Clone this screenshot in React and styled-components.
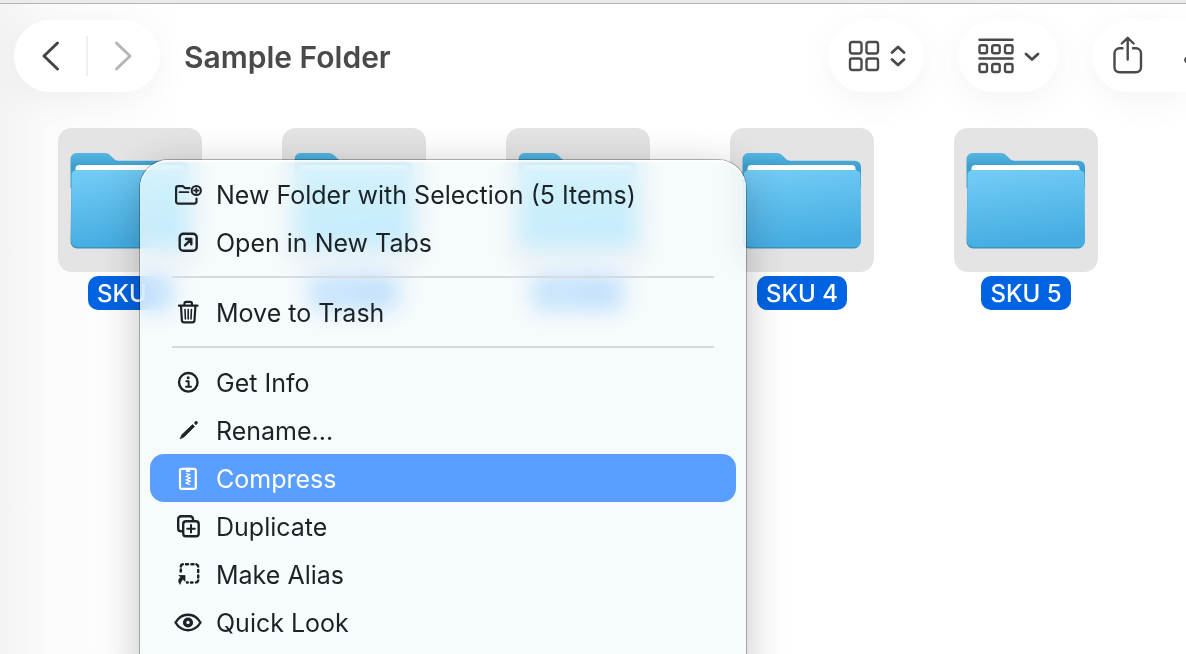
import React from "react";

import styled, { createGlobalStyle } from "styled-components";

const files = ["SKU 1", "SKU 2", "SKU 3", "SKU 4", "SKU 5"];

function App() {
  return (
    <>
      <GlobalStyle />
      <Window>
        <Toolbar>
          <NavGroup>
            <NavButton type="button" aria-label="Back">
              <BackIcon />
            </NavButton>
            <NavDivider />
            <NavButton type="button" aria-label="Forward" $muted>
              <ForwardIcon />
            </NavButton>
          </NavGroup>
          <Title>Sample Folder</Title>
          <ToolButton type="button" aria-label="View as icons">
            <GridIcon />
            <UpDownIcon />
          </ToolButton>
          <ToolButton type="button" aria-label="Group items">
            <GroupIcon />
            <DownIcon />
          </ToolButton>
          <EdgeGroup>
            <EdgeButton type="button" aria-label="Share">
              <ShareIcon />
            </EdgeButton>
            <EdgeButton type="button" aria-label="Edit tags">
              <TagIcon />
            </EdgeButton>
          </EdgeGroup>
        </Toolbar>
        <Files>
          {files.map((name) => (
            <File key={name}>
              <Thumb>
                <FolderIcon />
              </Thumb>
              <FileName>{name}</FileName>
            </File>
          ))}
        </Files>
        <Menu aria-label="Folder actions">
          <MenuItem type="button">
            <NewFolderIcon />
            New Folder with Selection (5 Items)
          </MenuItem>
          <MenuItem type="button">
            <OpenIcon />
            Open in New Tabs
          </MenuItem>
          <Separator />
          <MenuItem type="button">
            <TrashIcon />
            Move to Trash
          </MenuItem>
          <Separator />
          <MenuItem type="button">
            <InfoIcon />
            Get Info
          </MenuItem>
          <MenuItem type="button">
            <PencilIcon />
            Rename...
          </MenuItem>
          <MenuItem type="button" $active>
            <ZipIcon />
            Compress
          </MenuItem>
          <MenuItem type="button">
            <DuplicateIcon />
            Duplicate
          </MenuItem>
          <MenuItem type="button">
            <AliasIcon />
            Make Alias
          </MenuItem>
          <MenuItem type="button">
            <EyeIcon />
            Quick Look
          </MenuItem>
        </Menu>
      </Window>
    </>
  );
}

const GlobalStyle = createGlobalStyle`
  * {
    box-sizing: border-box;
  }
  body {
    margin: 0;
    font-family: Inter, "Liberation Sans", sans-serif;
  }
  button {
    border: none;
    padding: 0;
    background: none;
    font: inherit;
    color: inherit;
  }
`;

const Window = styled.div`
  position: relative;
  height: 100vh;
  overflow: hidden;
  border-top: 3px solid #ebebeb;
  box-shadow: inset 0 1px #b4b4b4;
  background: linear-gradient(to right, #f3f3f4, #fbfbfb 50px, #fff 180px);
`;

const Toolbar = styled.header`
  display: flex;
  align-items: center;
  gap: 34px;
  padding: 17px 0 36px 14px;
`;

const Pill = styled.div`
  display: flex;
  align-items: center;
  height: 72px;
  border-radius: 36px;
  background: #fff;
  box-shadow: 0 8px 36px rgba(0, 0, 0, 0.05);
  color: #4a4a4a;
`;

const NavGroup = styled(Pill)``;

const NavButton = styled.button`
  display: flex;
  justify-content: center;
  width: 72px;
  color: ${(props) => (props.$muted ? "#b5b5b5" : "#444")};
`;

const NavDivider = styled.span`
  width: 2px;
  height: 40px;
  background: #f0f0f0;
`;

const Title = styled.h1`
  flex: 1;
  margin: 0 0 0 -10px;
  padding-top: 2px;
  font-size: 30px;
  font-weight: 600;
  line-height: 36px;
  color: #4a4a4a;
  white-space: nowrap;
`;

const ToolButton = styled(Pill).attrs({ as: "button" })`
  gap: 10px;
  padding: 0 18px 0 20px;
`;

const EdgeGroup = styled(Pill)`
  gap: 40px;
  width: 94px;
  padding-left: 20px;
  border-radius: 36px 0 0 36px;
  clip-path: inset(-60px 0 -60px -60px);
`;

const EdgeButton = styled.button`
  display: flex;
  flex-shrink: 0;
`;

const Files = styled.main`
  display: grid;
  grid-template-columns: repeat(auto-fill, 144px);
  gap: 40px 80px;
  padding: 0 58px;
`;

const File = styled.div`
  display: flex;
  flex-direction: column;
  align-items: center;
  gap: 4px;
`;

const Thumb = styled.div`
  height: 144px;
  border-radius: 14px;
  background: #e4e4e4;
`;

const FileName = styled.span`
  padding: 2px 9px 0;
  border-radius: 10px;
  background: #0063e1;
  font-size: 24px;
  font-weight: 500;
  line-height: 32px;
  color: #fff;
`;

const Menu = styled.nav`
  position: absolute;
  top: 157px;
  bottom: -40px;
  left: 140px;
  width: 606px;
  padding: 10px;
  border-radius: 28px;
  background: rgba(244, 250, 251, 0.79);
  backdrop-filter: blur(11px) saturate(1.5);
  box-shadow: 0 0 0 1px rgba(0, 0, 0, 0.28), 0 8px 40px rgba(0, 0, 0, 0.24),
    inset 0 2px 1px rgba(255, 255, 255, 0.8);
`;

const MenuItem = styled.button`
  display: flex;
  align-items: center;
  gap: 14px;
  width: 100%;
  height: 48px;
  padding: 2px 0 0 24px;
  border-radius: 14px;
  background: ${(props) => (props.$active ? "#5a9fff" : "transparent")};
  font-size: 25px;
  color: ${(props) => (props.$active ? "#fff" : "#1c2226")};
  white-space: nowrap;
`;

const Separator = styled.hr`
  height: 2px;
  margin: 10px 22px;
  border: none;
  background: #d5dbdf;
`;

const Glyph = styled.svg`
  display: block;
  flex-shrink: 0;
  fill: none;
  stroke: currentColor;
  stroke-width: ${(props) => props.$weight || 2.4};
  stroke-linecap: round;
  stroke-linejoin: round;
`;

function BackIcon() {
  return (
    <Glyph width="20" height="32" viewBox="0 0 20 32" $weight={3}>
      <path d="M17.5 3 4 16l13.5 13" />
    </Glyph>
  );
}

function ForwardIcon() {
  return (
    <Glyph width="20" height="32" viewBox="0 0 20 32" $weight={3}>
      <path d="M2.5 3 16 16 2.5 29" />
    </Glyph>
  );
}

function GridIcon() {
  return (
    <Glyph width="32" height="32" viewBox="0 0 32 32">
      <rect x="2" y="2" width="11.5" height="11.5" rx="2.2" />
      <rect x="18.5" y="2" width="11.5" height="11.5" rx="2.2" />
      <rect x="2" y="18.5" width="11.5" height="11.5" rx="2.2" />
      <rect x="18.5" y="18.5" width="11.5" height="11.5" rx="2.2" />
    </Glyph>
  );
}

function UpDownIcon() {
  return (
    <Glyph width="16" height="24" viewBox="0 0 16 24" $weight={2.8}>
      <path d="M2 8.5 8 3l6 5.500M2 15.500 8 21l6-5.500" />
    </Glyph>
  );
}

function DownIcon() {
  return (
    <Glyph width="16" height="24" viewBox="0 0 16 24" $weight={2.8}>
      <path d="M2 10l6 5.500 6-5.500" />
    </Glyph>
  );
}

function GroupIcon() {
  return (
    <Glyph width="36" height="36" viewBox="0 0 36 36">
      <path d="M1.500 1.800h33M1.500 20.500h33" />
      <rect x="1.500" y="7.300" width="7.500" height="8" rx="1.800" />
      <rect x="14.200" y="7.300" width="7.500" height="8" rx="1.800" />
      <rect x="27" y="7.300" width="7.500" height="8" rx="1.800" />
      <rect x="1.500" y="26" width="7.500" height="8" rx="1.800" />
      <rect x="14.200" y="26" width="7.500" height="8" rx="1.800" />
      <rect x="27" y="26" width="7.500" height="8" rx="1.800" />
    </Glyph>
  );
}

function ShareIcon() {
  return (
    <Glyph width="32" height="40" viewBox="0 0 32 40">
      <path d="M10.500 12.300H7.500a5 5 0 0 0-5 5v14a5 5 0 0 0 5 5h16.500a5 5 0 0 0 5-5v-14a5 5 0 0 0-5-5h-3" />
      <path d="M15.700 23.500V2M9.800 7.500l5.900-5.700 5.900 5.700" />
    </Glyph>
  );
}

function TagIcon() {
  return (
    <Glyph width="32" height="40" viewBox="0 0 32 40">
      <path d="M2 22.500 12 13h14a4 4 0 0 1 4 4v13a4 4 0 0 1-4 4H12L2 25.500a2 2 0 0 1 0-3z" />
    </Glyph>
  );
}

function FolderIcon() {
  return (
    <svg width="144" height="144" viewBox="0 0 144 144" display="block">
      <defs>
        <linearGradient id="folderBack" x1="0" y1="0" x2="0" y2="1">
          <stop offset="0" stopColor="#55b6e2" />
          <stop offset="0.4" stopColor="#3d9fce" />
          <stop offset="1" stopColor="#3d9fce" />
        </linearGradient>
        <linearGradient id="folderFront" x1="0" y1="0" x2="0.2" y2="1">
          <stop offset="0" stopColor="#74cdf6" />
          <stop offset="1" stopColor="#46ade2" />
        </linearGradient>
      </defs>
      <path
        d="M12.500 31a6 6 0 0 1 6-6h28c3 0 4.500 1 6.500 3l2.500 2.500c1.500 1.500 3 2.200 5.500 2.200h64a6 6 0 0 1 6 6V60h-118.500z"
        fill="url(#folderBack)"
      />
      <path d="M17.500 52V41a4 4 0 0 1 4-4h100a4 4 0 0 1 4 4v11z" fill="#fff" />
      <path
        d="M13.500 48c0-4 2.500-6 6-6h105c3.500 0 6 2 6 6v66a6.500 6.500 0 0 1-6.500 6.500H19a6.500 6.500 0 0 1-6.500-6.500z"
        fill="#3c94bf"
      />
      <path
        d="M13.500 48c0-4 2.500-6 6-6h105c3.500 0 6 2 6 6l.5 65a6 6 0 0 1-6 6H19a6 6 0 0 1-6-6z"
        fill="url(#folderFront)"
      />
    </svg>
  );
}

function NewFolderIcon() {
  return (
    <Glyph width="28" height="28" viewBox="0 0 28 28" $weight={2.2}>
      <path d="M15.500 7.200h-4.300L9 5.200H4.200a2.100 2.100 0 0 0-2.100 2.100v13.200a2.200 2.200 0 0 0 2.200 2.200h16a2.200 2.200 0 0 0 2.200-2.200v-2.800" />
      <path d="M5.500 11.200h9" strokeWidth="1.800" />
      <circle cx="22.300" cy="9.500" r="4.600" strokeWidth="2" />
      <path d="M22.300 7.300v4.400M20.100 9.500h4.400" strokeWidth="1.800" />
    </Glyph>
  );
}

function OpenIcon() {
  return (
    <Glyph width="28" height="28" viewBox="0 0 28 28">
      <rect x="5.700" y="4.700" width="17" height="17" rx="3.800" />
      <path d="M11 16.300l6-6M12 10h5.300v5.300" />
    </Glyph>
  );
}

function TrashIcon() {
  return (
    <Glyph width="28" height="28" viewBox="0 0 28 28" $weight={2.2}>
      <path d="M5 6.700h18.500M10.500 6.500V4.500a1.700 1.700 0 0 1 1.700-1.700h4a1.700 1.700 0 0 1 1.700 1.700v2" />
      <path d="M7 7l.9 14.300a2.200 2.200 0 0 0 2.200 2h8.200a2.200 2.200 0 0 0 2.200-2l.9-14.300" />
      <path
        d="M11 10.500l.4 9.500M14.200 10.500v9.500M17.400 10.500l-.4 9.500"
        strokeWidth="1.600"
      />
    </Glyph>
  );
}

function InfoIcon() {
  return (
    <Glyph width="28" height="28" viewBox="0 0 28 28">
      <circle cx="14.300" cy="13.300" r="9.300" />
      <circle cx="14.200" cy="8.700" r="1.500" fill="currentColor" stroke="none" />
      <path d="M12.300 12.300h2.300v5.300M12 17.800h5" strokeWidth="2" />
    </Glyph>
  );
}

function PencilIcon() {
  return (
    <Glyph width="28" height="28" viewBox="0 0 28 28">
      <path
        d="M6.300 21.500l1.600-3.800L18.600 7.600l1.900 1.900-10.600 10.400z"
        fill="currentColor"
        strokeWidth="0.800"
      />
      <path d="M21.900 6l.3-.3" strokeWidth="3.200" />
    </Glyph>
  );
}

function ZipIcon() {
  return (
    <Glyph width="28" height="28" viewBox="0 0 28 28" $weight={2.2}>
      <rect x="6" y="3.800" width="15.800" height="20" rx="1.800" />
      <path d="M12.800 3.200h3v3.300h-3z" fill="currentColor" strokeWidth="1" />
      <path
        d="M12.500 8.500l3.500 1-4 2 4.500 1.300-4.500 2 4.500 1.300-4.500 2 3.500 1.400"
        strokeWidth="1.300"
      />
    </Glyph>
  );
}

function DuplicateIcon() {
  return (
    <Glyph width="28" height="28" viewBox="0 0 28 28">
      <path d="M8 18.200H7A2.800 2.800 0 0 1 4.200 15.400V6a2.800 2.800 0 0 1 2.800-2.800h9.200A2.800 2.800 0 0 1 19 6v.8" />
      <rect x="9.200" y="8.300" width="15.500" height="15" rx="2.800" />
      <path d="M17 12v7.600M13.200 15.800h7.600" strokeWidth="2" />
    </Glyph>
  );
}

function AliasIcon() {
  return (
    <Glyph width="28" height="28" viewBox="0 0 28 28">
      <path
        d="M6.800 10.500v-2M6.800 5.500a2.500 2.500 0 0 1 2-2.200M12 3.200h2M17.500 3.200h2M22.500 3.400a2.500 2.500 0 0 1 1.700 2.100M24.200 9v2M24.200 14.500v2M24.200 19.500a2.500 2.500 0 0 1-2.200 1.900M18.500 21.400h-1.500M13.700 21.400h-.7"
        strokeWidth="2.500"
      />
      <path
        d="M5.200 14.500h5.800v5.800l-2-2c-1.400 1.400-2.200 2.600-3 5-2-3-1.700-5.300.8-7.200z"
        fill="currentColor"
        strokeWidth="0.800"
      />
    </Glyph>
  );
}

function EyeIcon() {
  return (
    <Glyph width="28" height="28" viewBox="0 0 28 28">
      <path d="M1.500 13.500C4.500 8.500 9 5.800 14 5.800s9.500 2.700 12.500 7.700c-3 5-7.500 7.700-12.500 7.700S4.500 18.500 1.500 13.500z" />
      <circle cx="14" cy="13.500" r="3.400" strokeWidth="3.400" />
    </Glyph>
  );
}

export default App;
